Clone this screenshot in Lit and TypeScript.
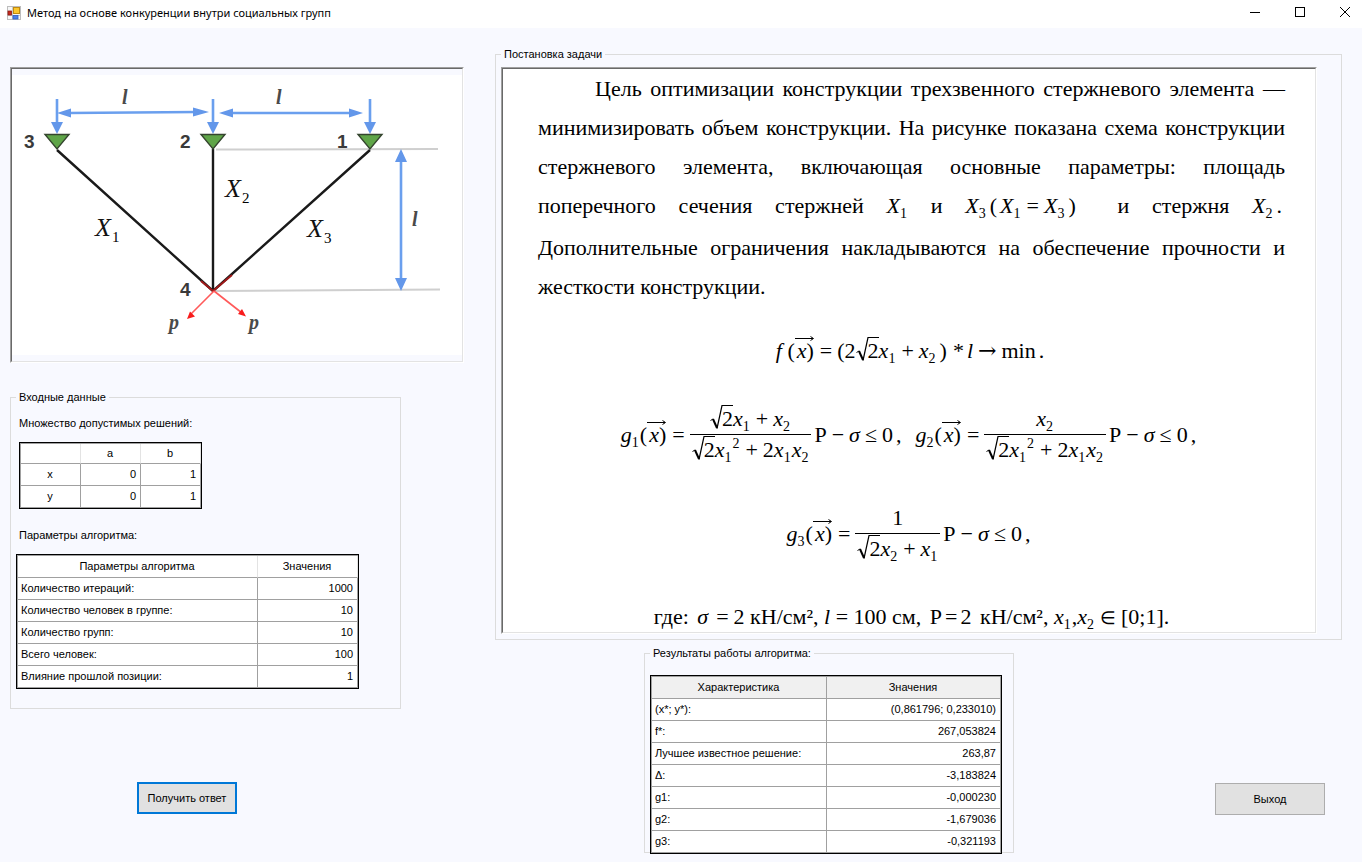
import { LitElement, html, svg, css } from "lit";
import type { TemplateResult } from "lit";
import { customElement, property } from "lit/decorators.js";

type Row = { name: string; value: string };

const PARAMS: Row[] = [
  { name: "Количество итераций:", value: "1000" },
  { name: "Количество человек в группе:", value: "10" },
  { name: "Количество групп:", value: "10" },
  { name: "Всего человек:", value: "100" },
  { name: "Влияние прошлой позиции:", value: "1" },
];

const RESULTS: Row[] = [
  { name: "(x*; y*):", value: "(0,861796; 0,233010)" },
  { name: "f*:", value: "267,053824" },
  { name: "Лучшее известное решение:", value: "263,87" },
  { name: "Δ:", value: "-3,183824" },
  { name: "g1:", value: "-0,000230" },
  { name: "g2:", value: "-1,679036" },
  { name: "g3:", value: "-0,321193" },
];

/* Window caption with the form icon and the system buttons. */
@customElement("title-bar")
class TitleBar extends LitElement {
  @property() caption = "";

  static styles = css`
    :host {
      display: flex;
      align-items: center;
      height: 28px;
      padding: 0 2px 3px 7px;
      box-sizing: border-box;
      background: #fff;
      color: #000;
      font: 11px/16px "Noto Sans", "Open Sans", sans-serif;
    }
    .icon {
      display: block;
      width: 14px;
      height: 14px;
      margin-right: 6px;
    }
    .caption {
      flex: 1;
      margin: 0;
      font-size: 11px;
      font-weight: 400;
    }
    .buttons {
      display: flex;
      gap: 15px;
    }
    .sys {
      display: grid;
      place-items: start center;
      width: 30px;
      height: 25px;
      padding: 6px 0 0;
      border: 0;
      background: transparent;
    }
    .sys svg {
      width: 12px;
      height: 12px;
      fill: none;
      stroke: #000;
    }
  `;

  render() {
    return html`
      <svg class="icon" viewBox="0 0 14 14" aria-hidden="true">
        <rect x="0.5" y="0.5" width="13" height="13" fill="#f6f6f6" stroke="#bdbdbd" />
        <path d="M5.5 1V13M1 9.5H13" stroke="#c9c9c9" />
        <rect x="1" y="5" width="3.5" height="4" fill="#c8281c" stroke="#8a1a12" stroke-width="0.8" />
        <rect x="6.5" y="1.5" width="6" height="6" fill="#fbc62c" stroke="#c08a10" />
        <rect x="6" y="9.5" width="5" height="3.5" fill="#4a7fe8" stroke="#2f5fc4" stroke-width="0.8" />
      </svg>
      <h1 class="caption">${this.caption}</h1>
      <div class="buttons">
        <button class="sys" aria-label="Свернуть">
          <svg viewBox="0 0 12 12"><path d="M1 6.5H11" /></svg>
        </button>
        <button class="sys" aria-label="Развернуть">
          <svg viewBox="0 0 12 12"><rect x="1.5" y="1.5" width="9" height="9" /></svg>
        </button>
        <button class="sys" aria-label="Закрыть">
          <svg viewBox="0 0 12 12"><path d="M1 1L11 11M11 1L1 11" /></svg>
        </button>
      </div>
    `;
  }
}

/* Scheme of the three-bar truss. */
@customElement("truss-figure")
class TrussFigure extends LitElement {
  static styles = css`
    :host {
      display: block;
    }
    .scheme {
      display: block;
      width: 100%;
      background: #fff;
    }
    .dim {
      stroke: #6a9fee;
      stroke-width: 2.6;
    }
    .head {
      fill: #6397ea;
    }
    .guide {
      stroke: #cfcfcf;
      stroke-width: 2;
    }
    .bar {
      stroke: #1a1a1a;
      stroke-width: 2.4;
    }
    .support {
      fill: #5fa548;
      stroke: #35452f;
      stroke-width: 1.4;
    }
    .force {
      stroke: #ff5a5a;
      stroke-width: 1.6;
    }
    .force-head {
      fill: #f81c1c;
    }
    .node {
      font: 700 19px "Liberation Sans", Arial, sans-serif;
      fill: #3a3a3a;
    }
    .len {
      font: italic 700 20px "Liberation Serif", serif;
      fill: #4a4a4a;
    }
    .var {
      font: italic 26px "Liberation Serif", serif;
      fill: #111;
    }
    .idx {
      font: 15px "Liberation Serif", serif;
    }
  `;

  private support(x: number) {
    return svg`
      <path class="dim" d="M${x} 99V123" />
      <path class="head" d="M${x - 6} 122H${x + 6}L${x} 134Z" />
      <path class="support" d="M${x - 12} 134.5H${x + 12}L${x} 149Z" />`;
  }

  private variable(n: number, x: number, y: number) {
    return svg`<text class="var" x=${x} y=${y}>X</text>
      <text class="idx" x=${x + 17} y=${y + 6}>${n}</text>`;
  }

  render() {
    return html`
      <svg class="scheme" viewBox="12 75 450 280" role="img" aria-label="Схема конструкции стержневого элемента">
        <path class="guide" d="M216 149.5L438 149M216 291L440 289.5" />
        <path class="dim" d="M68 113L198 112M230 113H352M401 158V282" />
        <path class="head" d="M57 113L71 108.500V117.500ZM209 112L193 107.500V116.500ZM219 113L233 108.500V117.500ZM363 113L349 108.500V117.500ZM401 149L395 162H407ZM401 291L395 278H407Z" />
        <path class="bar" d="M57 150L213 291M213 149V291M370 150L213 291" />
        <path d="M201 281L213 291L232 275" fill="none" stroke="#a01818" stroke-width="2" />
        ${this.support(57)} ${this.support(213)} ${this.support(370)}
        <path class="force" d="M214 291L190 315M214 291L242 313" />
        <path class="force-head" d="M187 319L190 311.500L195 316.500ZM246 316.500L238 314L242 309Z" />
        <text class="node" x="24" y="148">3</text>
        <text class="node" x="180" y="148">2</text>
        <text class="node" x="337" y="148">1</text>
        <text class="node" x="180" y="296">4</text>
        <text class="len" x="122" y="104">l</text>
        <text class="len" x="276" y="104">l</text>
        <text class="len" x="412" y="226">l</text>
        <text class="len" x="169" y="329">p</text>
        <text class="len" x="249" y="329">p</text>
        ${this.variable(2, 225, 197)} ${this.variable(1, 95, 236)} ${this.variable(3, 307, 237)}
      </svg>
    `;
  }
}

/* Task description: justified text and the objective with its constraints. */
@customElement("task-text")
class TaskText extends LitElement {
  static styles = css`
    :host {
      display: block;
      padding: 0 30px 0 35px;
      background: #fff;
      color: #000;
      font: 22px/39px "Liberation Serif", "Times New Roman", serif;
    }
    .intro {
      margin: 0 0 30px;
      text-align: justify;
      text-indent: 57px;
    }
    .inline {
      display: inline-block;
      padding-bottom: 3px;
      text-indent: 0;
      white-space: nowrap;
    }
    .wide {
      margin-right: 16px;
    }
    .formulas {
      display: flex;
      flex-direction: column;
      gap: 38px;
      line-height: 30px;
    }
    .row {
      display: flex;
      justify-content: center;
      align-items: center;
      white-space: pre;
    }
    i {
      font-style: italic;
    }
    sub,
    sup {
      padding-right: 1px;
      font-size: 14px;
      line-height: 0;
    }
    sub {
      vertical-align: -5px;
    }
    sup {
      vertical-align: 9px;
    }
    .op {
      padding: 0 5px;
    }
    .pad {
      padding: 0 3px;
    }
    .to,
    .in {
      line-height: 0;
    }
    .to {
      font-family: "DejaVu Serif", serif;
    }
    .in {
      font-size: 18px;
    }
    .gap {
      padding-right: 8px;
    }
    .frac {
      display: flex;
      flex-direction: column;
      align-items: stretch;
      text-align: center;
    }
    .den {
      border-top: 1px solid #000;
      padding: 0 2px;
    }
    .root,
    .vec {
      position: relative;
      display: inline-block;
    }
    .root {
      padding-left: 12px;
    }
    .vec {
      padding: 0 1px 0 2px;
    }
    .mark,
    .arrow {
      position: absolute;
      left: 0;
      fill: none;
      stroke: #000;
    }
    .mark {
      top: 1px;
      width: 23px;
      height: 24px;
    }
    .arrow {
      top: 0;
      width: 19px;
      height: 5px;
    }
  `;

  private v(name: string, n: number, pow = "") {
    return html`<i>${name}</i><sub>${n}</sub>${pow ? html`<sup>${pow}</sup>` : ""}`;
  }

  private root() {
    return html`<span class="root"><svg class="mark" viewBox="0 0 23 24" aria-hidden="true"><path d="M0.5 15.500L3 14" /><path d="M3 14L7 23" stroke-width="2" /><path d="M7 23.500L12 0.500H23" stroke-width="1.200" /></svg>2</span>`;
  }

  private vec() {
    return html`(<span class="vec"><svg class="arrow" viewBox="0 0 19 5" aria-hidden="true"><path d="M0 2.500H18M15.500 0.500L18.500 2.500L15.500 4.500" /></svg><i>x</i>)</span>`;
  }

  private op(sign: string, kind = "") {
    return html`<span class="op ${kind}">${sign}</span>`;
  }

  private pad(sign: string) {
    return html`<span class="pad">${sign}</span>`;
  }

  private frac(num: TemplateResult, den: TemplateResult) {
    return html`<span class="frac"><span>${num}</span><span class="den">${den}</span></span>`;
  }

  private limit(n: number, num: TemplateResult, den: TemplateResult) {
    return html`<span>${this.v("g", n)}${this.vec()}${this.op("=")}</span>${this.frac(num, den)}<span class="pad">P${this.op("−")}<i>σ</i>${this.op("≤")}0${this.pad(",")}</span>`;
  }

  render() {
    const x1 = this.v("x", 1);
    const x2 = this.v("x", 2);
    const den = html`${this.root()}${this.v("x", 1, "2")}${this.op("+")}2${x1}${x2}`;
    return html`
      <p class="intro">
        Цель оптимизации конструкции трехзвенного стержневого элемента — минимизировать объем
        конструкции. На рисунке показана схема конструкции стержневого элемента, включающая основные
        параметры: площадь поперечного сечения стержней
        <span class="inline">${this.v("X", 1)}</span> и
        <span class="inline wide">${this.v("X", 3)}${this.pad("(")}${this.v("X", 1)}${this.op("=")}${this.v("X", 3)}${this.pad(")")}</span>
        и стержня <span class="inline">${this.v("X", 2)}${this.pad(".")}</span> Дополнительные ограничения
        накладываются на обеспечение прочности и жесткости конструкции.
      </p>
      <div class="formulas">
        <div class="row">
          <span><i>f</i> ${this.vec()}${this.op("=")}(2${this.root()}${x1}${this.op("+")}${x2}${this.pad(")")}${this.pad("*")}<i>l</i>${this.op("→", "to")}min${this.pad(".")}</span>
        </div>
        <div class="row">${this.limit(1, html`${this.root()}${x1}${this.op("+")}${x2}`, den)}<span class="gap"></span>${this.limit(2, x2, den)}</div>
        <div class="row">${this.limit(3, html`1`, html`${this.root()}${x2}${this.op("+")}${x1}`)}</div>
        <div class="row"><span>где: <span class="pad"><i>σ</i></span>${this.op("=")}2 кН/см², <i>l</i> = 100 см, ${this.pad("P")}=${this.pad("2")} кН/см², ${x1},${x2}${this.op("∈", "in")}[0;1].</span></div>
      </div>
    `;
  }
}

@customElement("app-root")
class AppRoot extends LitElement {
  static styles = css`
    :host {
      display: block;
      min-height: 100vh;
      background: #f8f9ff;
      color: #000;
      font: 11px/13px "Liberation Sans", Arial, sans-serif;
    }
    .form {
      display: grid;
      grid-template-columns: 454px minmax(0, 1fr);
      column-gap: 31px;
      padding: 20px 20px 8px 10px;
    }
    .sunken {
      border: 1px solid;
      border-color: #a0a0a0 #fff #fff #a0a0a0;
    }
    .well {
      border: 1px solid;
      border-color: #696969 #e3e3e3 #e3e3e3 #696969;
    }
    .figure {
      margin: 19px 0 28px;
    }
    .figure .well {
      padding: 6px 0;
    }
    .group {
      min-width: 0;
      margin: 0;
      border: 1px solid #dcdcdc;
      padding: 0;
    }
    .group > legend {
      padding: 0 3px;
    }
    .inputs {
      width: 391px;
      box-sizing: border-box;
      padding: 13px 5px 19px;
    }
    .label {
      margin: 0 3px 12px;
    }
    .task {
      padding: 6px 24px 5px 5px;
    }
    .grid {
      border: 1px solid #000;
      border-spacing: 0;
      background: #fff;
      table-layout: fixed;
      box-shadow: inset 1px 1px #a0a0a0;
      padding: 1px 0 0 1px;
    }
    .grid th,
    .grid td {
      height: 21px;
      padding: 0 4px 0 3px;
      border-right: 1px solid #a0a0a0;
      border-bottom: 1px solid #a0a0a0;
      font-weight: 400;
      text-align: left;
      white-space: nowrap;
    }
    .grid thead th {
      border-right-color: #e3e3e3;
      text-align: center;
    }
    .grid td {
      text-align: right;
    }
    .bounds {
      width: 183px;
      margin: 0 0 20px 3px;
    }
    .bounds thead th {
      height: 19px;
    }
    .bounds tbody th {
      text-align: center;
    }
    .params {
      width: 343px;
    }
    .params .key {
      width: 232px;
    }
    .results {
      width: 352px;
      margin: 15px 0 -2px;
    }
    .results .key {
      width: 167px;
    }
    .results thead th {
      background: #f0f0f0;
      border-right-color: #a0a0a0;
    }
    .bottom {
      display: flex;
      justify-content: space-between;
      align-items: flex-start;
      margin-top: 7px;
      padding: 0 17px 0 149px;
    }
    .outcome {
      width: 370px;
      box-sizing: border-box;
      padding: 0 5px;
    }
    .btn {
      display: block;
      height: 32px;
      border: 1px solid #adadad;
      background: #e1e1e1;
      color: #000;
      font: inherit;
      padding: 0;
    }
    .solve {
      width: 100px;
      margin: 73px 0 0 127px;
      border: 2px solid #0078d7;
    }
    .exit {
      width: 110px;
      margin-top: 136px;
    }
  `;

  private table(kind: string, head: string, rows: Row[]) {
    return html`
      <table class="grid ${kind}">
        <thead>
          <tr><th class="key" scope="col">${head}</th><th scope="col">Значения</th></tr>
        </thead>
        <tbody>
          ${rows.map((r) => html`<tr><th scope="row">${r.name}</th><td>${r.value}</td></tr>`)}
        </tbody>
      </table>
    `;
  }

  render() {
    return html`
      <title-bar caption="Метод на основе конкуренции внутри социальных групп"></title-bar>
      <main class="form">
        <section>
          <div class="sunken figure"><div class="well"><truss-figure></truss-figure></div></div>
          <fieldset class="group inputs">
            <legend>Входные данные</legend>
            <p class="label">Множество допустимых решений:</p>
            <table class="grid bounds">
              <thead>
                <tr><th></th><th scope="col">a</th><th scope="col">b</th></tr>
              </thead>
              <tbody>
                ${["x", "y"].map((n) => html`<tr><th scope="row">${n}</th><td>0</td><td>1</td></tr>`)}
              </tbody>
            </table>
            <p class="label">Параметры алгоритма:</p>
            ${this.table("params", "Параметры алгоритма", PARAMS)}
          </fieldset>
          <button class="btn solve">Получить ответ</button>
        </section>
        <section>
          <fieldset class="group task">
            <legend>Постановка задачи</legend>
            <div class="sunken"><div class="well"><task-text></task-text></div></div>
          </fieldset>
          <div class="bottom">
            <fieldset class="group outcome">
              <legend>Результаты работы алгоритма:</legend>
              ${this.table("results", "Характеристика", RESULTS)}
            </fieldset>
            <button class="btn exit">Выход</button>
          </div>
        </section>
      </main>
    `;
  }
}
